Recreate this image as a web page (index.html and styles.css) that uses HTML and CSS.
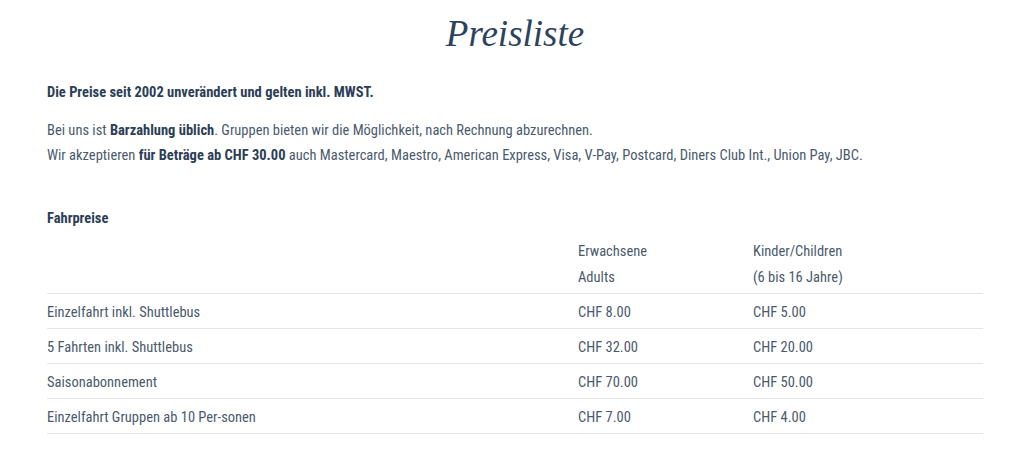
FILE: index.html
```html
<!DOCTYPE html>
<html lang="de">
<head>
<meta charset="utf-8">
<title>Preisliste</title>
<link rel="stylesheet" href="styles.css">
</head>
<body>
<main class="page">
  <h1 class="title">Preisliste</h1>
  <p class="lead">Die Preise seit 2002 unverändert und gelten inkl. MWST.</p>
  <p class="info">Bei uns ist <strong>Barzahlung üblich</strong>. Gruppen bieten wir die Möglichkeit, nach Rechnung abzurechnen.<br>Wir akzeptieren <strong>für Beträge ab CHF 30.00</strong> auch Mastercard, Maestro, American Express, Visa, V-Pay, Postcard, Diners Club Int., Union Pay, JBC.</p>
  <h2 class="section">Fahrpreise</h2>
  <table class="prices">
    <thead>
      <tr><th></th><th>Erwachsene<br>Adults</th><th>Kinder/Children<br>(6 bis 16 Jahre)</th></tr>
    </thead>
    <tbody>
      <tr><td>Einzelfahrt inkl. Shuttlebus</td><td>CHF 8.00</td><td>CHF 5.00</td></tr>
      <tr><td>5 Fahrten inkl. Shuttlebus</td><td>CHF 32.00</td><td>CHF 20.00</td></tr>
      <tr><td>Saisonabonnement</td><td>CHF 70.00</td><td>CHF 50.00</td></tr>
      <tr><td>Einzelfahrt Gruppen ab 10 Per-sonen</td><td>CHF 7.00</td><td>CHF 4.00</td></tr>
    </tbody>
  </table>
</main>
</body>
</html>
```
FILE: styles.css
```css
html, body { margin: 0; padding: 0; background: #fff; }
body {
  font-family: "Roboto Condensed", "Liberation Sans Narrow", "Roboto", sans-serif;
  color: #4a5a6d;
  font-size: 14.5px;
}
.page { width: 936px; padding: 0 0 0 47px; }
.title {
  margin: 0;
  padding-top: 11px;
  text-align: center;
  font-family: "Liberation Serif", serif;
  font-style: italic;
  font-weight: 400;
  font-size: 37px;
  line-height: 46px;
  color: #2c4360;
}
.lead { margin: 26px 0 0; font-weight: 700; color: #2c3e55; line-height: 20px; }
.info { margin: 15px 0 0; line-height: 25px; }
.info strong { color: #2c3e55; }
.section { margin: 41px 0 0; font-size: 14.5px; font-weight: 700; color: #2c3e55; line-height: 20px; }
.prices { width: 100%; border-collapse: collapse; margin-top: 9px; }
.prices th { text-align: left; font-weight: 400; line-height: 26px; padding: 1px 0 2px; vertical-align: top; }
.prices th:nth-child(1) { width: 531px; }
.prices th:nth-child(2) { width: 175px; }
.prices tr { border-bottom: 1px solid #e3e5e8; }
.prices td { padding: 10px 0 6px; line-height: 18px; }
```
